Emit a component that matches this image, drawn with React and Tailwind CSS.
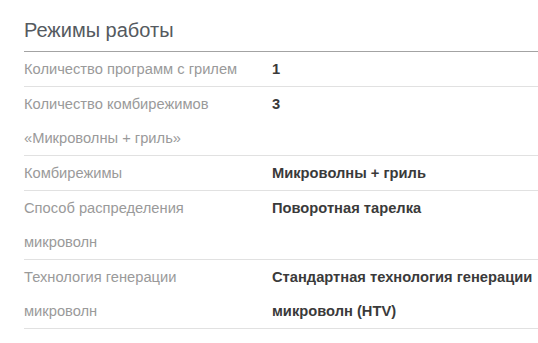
import React from 'react';

const rows = [
  { label: 'Количество программ с грилем', value: '1' },
  { label: 'Количество комбирежимов «Микроволны + гриль»', value: '3' },
  { label: 'Комбирежимы', value: 'Микроволны + гриль' },
  { label: 'Способ распределения микроволн', value: 'Поворотная тарелка' },
  { label: 'Технология генерации микроволн', value: 'Стандартная технология генерации микроволн (HTV)' },
];

export default function App() {
  return (
    <div className="w-[538px] h-[343px] bg-white pl-6 font-['Liberation_Sans',Arial,sans-serif]">
      {/* заголовок */}
      <div className="h-[52px] pt-[12px] border-b border-[#a3a3a3]">
        <h2 className="text-[20px] leading-[36px] text-[#555a60]">Режимы работы</h2>
      </div>

      {/* характеристики */}
      {rows.map((row) => (
        <div key={row.label} className="flex border-b border-[#e1e1e1] text-[14.7px] leading-[34px]">
          <div className="w-[248px] shrink-0 pr-[28px] text-[#9a9a9a]">{row.label}</div>
          <div className="flex-1 pr-1 font-bold text-[#3a3a3a]">{row.value}</div>
        </div>
      ))}
    </div>
  );
}
